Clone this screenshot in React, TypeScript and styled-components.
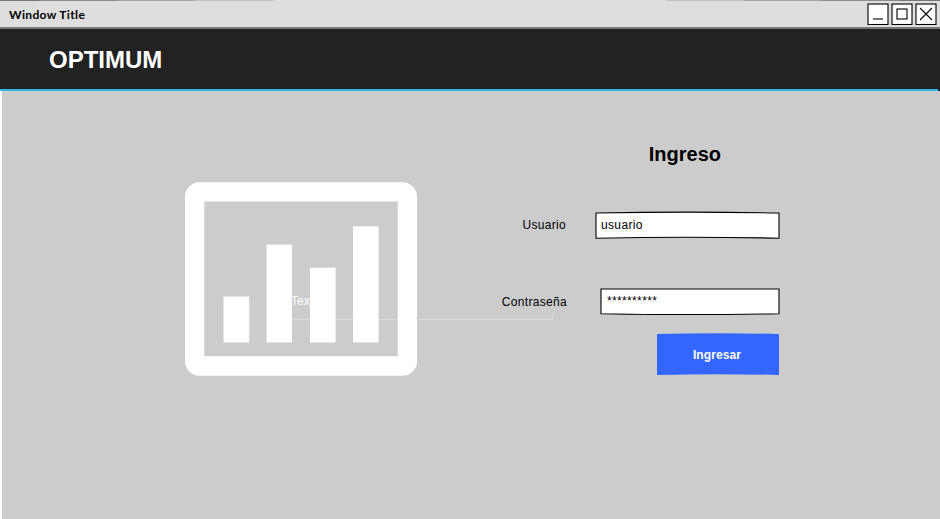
import React from "react";
import styled, { createGlobalStyle } from "styled-components";

const GlobalStyle = createGlobalStyle`
  * { box-sizing: border-box; }
  html, body { margin: 0; padding: 0; background: #cccccc; overflow: hidden; }
  body { font-family: "Liberation Sans", Arial, sans-serif; color: #000; }
`;

const Window = styled.div`
  width: 940px;
  height: 519px;
  display: flex;
  flex-direction: column;
  overflow: hidden;
`;

const TopEdge = styled.div`
  height: 1px;
  flex: none;
  background: linear-gradient(
    90deg,
    #777 0 39px, #8b8b8b 39px 117px, #a5a5a5 117px 195px, #c0c0c0 195px 274px, #dedede 274px 666px,
    #c0c0c0 666px 744px, #a5a5a5 744px 822px, #8b8b8b 822px 900px, #777 900px
  );
`;

const TitleBar = styled.div`
  height: 28px;
  flex: none;
  display: flex;
  align-items: flex-start;
  justify-content: space-between;
  padding: 2px 3px 0 9px;
  background: #dedede;
  border-bottom: 2px solid #777777;
`;

const WindowTitle = styled.span`
  font: 700 12px/24px Lato, "Noto Sans", sans-serif;
  letter-spacing: 0.35px;
  white-space: pre;
`;

const WindowControls = styled.div`
  display: flex;
  gap: 2px;
`;

const ControlIcon = styled.svg`
  display: block;
  width: 22px;
  height: 22px;
  fill: none;
  stroke: #000;
  stroke-width: 1.1px;
`;

const Header = styled.header`
  height: 62px;
  flex: none;
  padding-left: 49px;
  background: linear-gradient(90deg, #33b5e5 938px, #222222 938px) bottom / 100% 2px no-repeat #222222;
`;

const Brand = styled.h1`
  margin: 0;
  color: #ffffff;
  font-size: 24px;
  line-height: 61px;
`;

const Content = styled.main`
  flex: 1;
  display: flex;
  position: relative;
  border-left: 2px solid #ffffff;
  background: #cccccc;
`;

const Illustration = styled.div`
  width: 415px;
  flex: none;
  padding: 91px 0 0 183px;
`;

const Chart = styled.svg`
  display: block;
  position: relative;
  width: 232px;
  height: 194px;
`;

const GhostField = styled.div`
  position: absolute;
  left: 289px;
  top: 201px;
  width: 262px;
  height: 29px;
  color: #ffffff;
  font-size: 12px;
  line-height: 18px;
`;

const GhostLine = styled.svg`
  position: absolute;
  inset: 0;
  width: 262px;
  height: 29px;
  fill: none;
  stroke: #dcdcdc;
`;

const LoginForm = styled.form`
  width: 363px;
  display: flex;
  flex-direction: column;
  align-items: flex-end;
  padding-top: 49px;
`;

const FormTitle = styled.h2`
  margin: 0 59px 43px 0;
  font-size: 20px;
  line-height: 28px;
`;

const Field = styled.div<{ $after: number }>`
  display: flex;
  align-items: flex-start;
  margin-bottom: ${(p) => p.$after}px;
`;

const Label = styled.label<{ $gap: number; $line?: number }>`
  margin-right: ${(p) => p.$gap}px;
  font-size: 12px;
  line-height: ${(p) => p.$line ?? 28}px;
  letter-spacing: 0.32px;
`;

const Sketch = styled.div<{ $width: number }>`
  display: grid;
  width: ${(p) => p.$width}px;
  height: 28px;
  > * { grid-area: 1 / 1; }
`;

const Outline = styled.svg`
  display: block;
  width: 100%;
  height: 100%;
`;

const FieldShape = styled.path`
  fill: #ffffff;
  stroke: #000000;
  stroke-width: 1.1px;
`;

const Value = styled.span<{ $indent: number }>`
  padding-left: ${(p) => p.$indent}px;
  font-size: 12px;
  line-height: 28px;
  letter-spacing: 0.35px;
`;

const SubmitButton = styled.button`
  display: grid;
  width: 122px;
  height: 43px;
  margin-right: 1px;
  padding: 0;
  border: 0;
  background: none;
  color: #ffffff;
  font: 700 12px/45px "Liberation Sans", Arial, sans-serif;
  letter-spacing: 0.1px;
  > * { grid-area: 1 / 1; }
`;

const ButtonText = styled.span`
  z-index: 1;
  height: 43px;
  padding-right: 2px;
`;

const ControlFrame = () => <rect x="1" y="1" width="20" height="20.5" fill="#fff" />;

export default function App() {
  return (
    <>
      <GlobalStyle />
      <Window>
        <TopEdge />
        <TitleBar>
          <WindowTitle>Window Title</WindowTitle>
          <WindowControls>
            <ControlIcon viewBox="0 0 22 22">
              <ControlFrame />
              <path d="M6 16H16" />
            </ControlIcon>
            <ControlIcon viewBox="0 0 22 22">
              <ControlFrame />
              <rect x="6" y="6" width="10" height="10" />
            </ControlIcon>
            <ControlIcon viewBox="0 0 22 22">
              <ControlFrame />
              <path d="M5 5L17 17M17 5L5 17" />
            </ControlIcon>
          </WindowControls>
        </TitleBar>
        <Header>
          <Brand>OPTIMUM</Brand>
        </Header>
        <Content>
          <GhostField>
            Text
            <GhostLine viewBox="0 0 262 29">
              <path d="M0 27.5H261.5V22" />
            </GhostLine>
          </GhostField>
          <Illustration>
            <Chart viewBox="0 0 232 194" fill="#fff">
              <path
                fillRule="evenodd"
                d="M14.5 0.3H217.5A14.5 14.5 0 0 1 232 14.8V179.2A14.5 14.5 0 0 1 217.5 193.7H14.5A14.5 14.5 0 0 1 0 179.2V14.8A14.5 14.5 0 0 1 14.5 0.3ZM19.3 19.6V174.3H212.7V19.6Z"
              />
              <rect x="38.5" y="114.5" width="25.7" height="46" />
              <rect x="81.6" y="62.6" width="25.4" height="97.9" />
              <rect x="125" y="85.7" width="25.6" height="74.8" />
              <rect x="168" y="44.3" width="25.6" height="116.2" />
            </Chart>
          </Illustration>
          <LoginForm onSubmit={(e) => e.preventDefault()}>
            <FormTitle>Ingreso</FormTitle>
            <Field $after={48}>
              <Label $gap={29}>Usuario</Label>
              <Sketch $width={185}>
                <Outline viewBox="0 0 185 28">
                  <FieldShape d="M1 2Q92 0.3 184 2V27.2Q92 25.2 1 27.2Z" />
                </Outline>
                <Value $indent={6}>usuario</Value>
              </Sketch>
            </Field>
            <Field $after={16}>
              <Label $gap={33} $line={30}>Contraseña</Label>
              <Sketch $width={180}>
                <Outline viewBox="0 0 180 28">
                  <FieldShape d="M1 2H179V26.7Q90 28.5 1 26.7Z" />
                </Outline>
                <Value $indent={7}>**********</Value>
              </Sketch>
            </Field>
            <SubmitButton type="submit">
              <Outline viewBox="0 0 122 43">
                <path d="M0 1Q61 -0.6 122 1V42Q61 40.4 0 42Z" fill="#3366ff" />
              </Outline>
              <ButtonText>Ingresar</ButtonText>
            </SubmitButton>
          </LoginForm>
        </Content>
      </Window>
    </>
  );
}
